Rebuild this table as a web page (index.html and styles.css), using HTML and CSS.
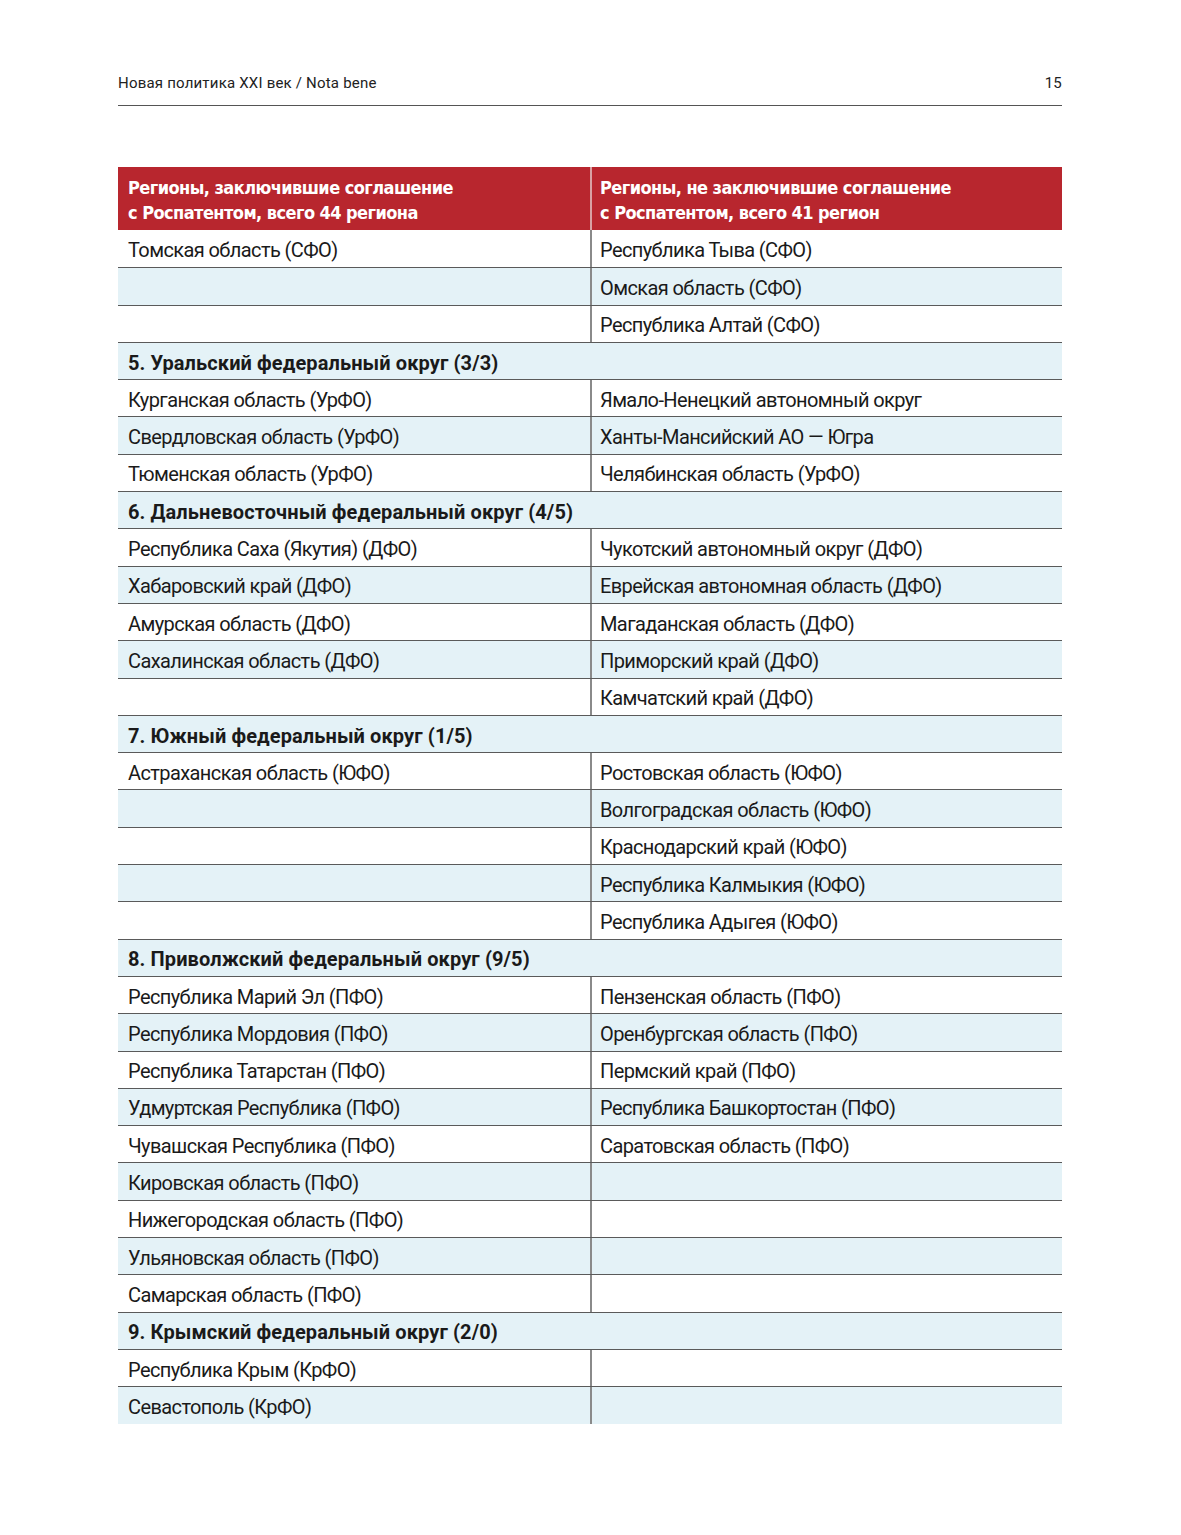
FILE: index.html
```html
<!DOCTYPE html>
<html lang="ru">
<head>
<meta charset="utf-8">
<link rel="stylesheet" href="styles.css">
</head>
<body>
<div class="page">
  <header class="running">
    <span class="title">Новая политика XXI век / Nota bene</span>
    <span class="num">15</span>
  </header>
  <div class="table">
    <div class="row head">
      <div class="cell">Регионы, заключившие соглашение<br>с Роспатентом, всего 44 региона</div>
      <div class="cell">Регионы, не заключившие соглашение<br>с Роспатентом, всего 41 регион</div>
    </div>
    <div class="row"><div class="cell">Томская область (СФО)</div><div class="cell">Республика Тыва (СФО)</div></div>
    <div class="row alt"><div class="cell"></div><div class="cell">Омская область (СФО)</div></div>
    <div class="row"><div class="cell"></div><div class="cell">Республика Алтай (СФО)</div></div>
    <div class="row alt sec"><div class="cell">5. Уральский федеральный округ (3/3)</div></div>
    <div class="row"><div class="cell">Курганская область (УрФО)</div><div class="cell">Ямало-Ненецкий автономный округ</div></div>
    <div class="row alt"><div class="cell">Свердловская область (УрФО)</div><div class="cell">Ханты-Мансийский АО — Югра</div></div>
    <div class="row"><div class="cell">Тюменская область (УрФО)</div><div class="cell">Челябинская область (УрФО)</div></div>
    <div class="row alt sec"><div class="cell">6. Дальневосточный федеральный округ (4/5)</div></div>
    <div class="row"><div class="cell">Республика Саха (Якутия) (ДФО)</div><div class="cell">Чукотский автономный округ (ДФО)</div></div>
    <div class="row alt"><div class="cell">Хабаровский край (ДФО)</div><div class="cell">Еврейская автономная область (ДФО)</div></div>
    <div class="row"><div class="cell">Амурская область (ДФО)</div><div class="cell">Магаданская область (ДФО)</div></div>
    <div class="row alt"><div class="cell">Сахалинская область (ДФО)</div><div class="cell">Приморский край (ДФО)</div></div>
    <div class="row"><div class="cell"></div><div class="cell">Камчатский край (ДФО)</div></div>
    <div class="row alt sec"><div class="cell">7. Южный федеральный округ (1/5)</div></div>
    <div class="row"><div class="cell">Астраханская область (ЮФО)</div><div class="cell">Ростовская область (ЮФО)</div></div>
    <div class="row alt"><div class="cell"></div><div class="cell">Волгоградская область (ЮФО)</div></div>
    <div class="row"><div class="cell"></div><div class="cell">Краснодарский край (ЮФО)</div></div>
    <div class="row alt"><div class="cell"></div><div class="cell">Республика Калмыкия (ЮФО)</div></div>
    <div class="row"><div class="cell"></div><div class="cell">Республика Адыгея (ЮФО)</div></div>
    <div class="row alt sec"><div class="cell">8. Приволжский федеральный округ (9/5)</div></div>
    <div class="row"><div class="cell">Республика Марий Эл (ПФО)</div><div class="cell">Пензенская область (ПФО)</div></div>
    <div class="row alt"><div class="cell">Республика Мордовия (ПФО)</div><div class="cell">Оренбургская область (ПФО)</div></div>
    <div class="row"><div class="cell">Республика Татарстан (ПФО)</div><div class="cell">Пермский край (ПФО)</div></div>
    <div class="row alt"><div class="cell">Удмуртская Республика (ПФО)</div><div class="cell">Республика Башкортостан (ПФО)</div></div>
    <div class="row"><div class="cell">Чувашская Республика (ПФО)</div><div class="cell">Саратовская область (ПФО)</div></div>
    <div class="row alt"><div class="cell">Кировская область (ПФО)</div><div class="cell"></div></div>
    <div class="row"><div class="cell">Нижегородская область (ПФО)</div><div class="cell"></div></div>
    <div class="row alt"><div class="cell">Ульяновская область (ПФО)</div><div class="cell"></div></div>
    <div class="row"><div class="cell">Самарская область (ПФО)</div><div class="cell"></div></div>
    <div class="row alt sec"><div class="cell">9. Крымский федеральный округ (2/0)</div></div>
    <div class="row"><div class="cell">Республика Крым (КрФО)</div><div class="cell"></div></div>
    <div class="row alt"><div class="cell">Севастополь (КрФО)</div><div class="cell"></div></div>
  </div>
</div>
</body>
</html>
```

FILE: styles.css
```css
html, body {
  margin: 0;
  padding: 0;
  background: #fff;
}
body {
  font-family: Roboto, "Liberation Sans", sans-serif;
  color: #1a1a1a;
}
.page {
  width: 944px;
  margin-left: 118px;
  padding-top: 73px;
}
.running {
  display: flex;
  justify-content: space-between;
  align-items: baseline;
  font-size: 15px;
  letter-spacing: 0.2px;
  line-height: 20px;
  color: #222;
  padding-bottom: 12px;
  border-bottom: 1px solid #555;
}
.table {
  margin-top: 61px;
}
.row {
  display: grid;
  grid-template-columns: 472px 472px;
  height: 37.3px;
  box-sizing: border-box;
  border-top: 1px solid #5a5a5a;
  background: #fff;
}
.row.alt {
  background: #e4f2f7;
}
.row.head {
  height: 63px;
  border-top: none;
  background: #b8262e;
}
.row.head + .row {
  border-top: none;
}
.cell {
  display: flex;
  align-items: center;
  padding-left: 10px;
  padding-top: 3px;
  font-size: 20px;
  letter-spacing: -0.6px;
  white-space: nowrap;
  box-sizing: border-box;
}
.cell + .cell {
  border-left: 2px solid #8a8a8a;
  padding-left: 8px;
}
.head .cell {
  color: #fff;
  font-family: "DejaVu Sans Condensed", "DejaVu Sans", sans-serif;
  font-weight: 700;
  font-size: 18px;
  line-height: 25px;
  letter-spacing: -0.55px;
  padding-top: 3px;
}
.head .cell + .cell {
  border-left-color: #d9a0a3;
}
.sec {
  grid-template-columns: 944px;
}
.sec .cell {
  font-weight: 700;
  letter-spacing: 0.1px;
}
```
